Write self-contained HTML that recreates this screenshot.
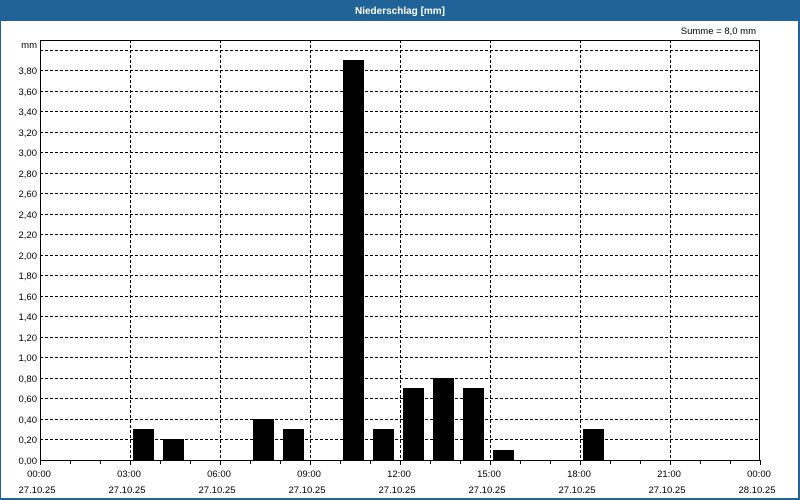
<!DOCTYPE html>
<html><head><meta charset="utf-8"><style>
html,body{margin:0;padding:0;width:800px;height:500px;overflow:hidden;background:#fff}
svg{display:block}
text{font-family:"Liberation Sans",sans-serif;font-size:9.5px;fill:#000}
</style></head><body>
<svg width="800" height="500" viewBox="0 0 800 500" shape-rendering="crispEdges">
<rect x="0" y="0" width="800" height="500" fill="#1f6399"/>
<rect x="1" y="21" width="797" height="477" fill="#fff"/>
<text x="400" y="14" text-anchor="middle" style="fill:#fff;font-weight:bold;font-size:10px">Niederschlag [mm]</text>
<text x="756" y="34" text-anchor="end">Summe = 8,0 mm</text>
<g stroke="#000" stroke-width="1" stroke-dasharray="3,2" fill="none">
<path d="M40 50.5H760M40 70.5H760M40 91.5H760M40 111.5H760M40 132.5H760M40 152.5H760M40 173.5H760M40 193.5H760M40 214.5H760M40 234.5H760M40 255.5H760M40 275.5H760M40 296.5H760M40 316.5H760M40 337.5H760M40 357.5H760M40 378.5H760M40 398.5H760M40 419.5H760M40 439.5H760"/>
<path d="M130.5 40V460M220.5 40V460M310.5 40V460M400.5 40V460M490.5 40V460M580.5 40V460M670.5 40V460"/>
</g>
<g fill="#000">
<rect x="133" y="429" width="21" height="31"/>
<rect x="163" y="439" width="21" height="21"/>
<rect x="253" y="419" width="21" height="41"/>
<rect x="283" y="429" width="21" height="31"/>
<rect x="343" y="60" width="21" height="400"/>
<rect x="373" y="429" width="21" height="31"/>
<rect x="403" y="388" width="21" height="72"/>
<rect x="433" y="378" width="21" height="82"/>
<rect x="463" y="388" width="21" height="72"/>
<rect x="493" y="450" width="21" height="10"/>
<rect x="583" y="429" width="21" height="31"/>
</g>
<rect x="40.5" y="40.5" width="719" height="420" fill="none" stroke="#000"/>
<g stroke="#000">
<path d="M40.5 460V465M70.5 460V464M100.5 460V464M130.5 460V465M160.5 460V464M190.5 460V464M220.5 460V465M250.5 460V464M280.5 460V464M310.5 460V465M340.5 460V464M370.5 460V464M400.5 460V465M430.5 460V464M460.5 460V464M490.5 460V465M520.5 460V464M550.5 460V464M580.5 460V465M610.5 460V464M640.5 460V464M670.5 460V465M700.5 460V464M730.5 460V464M760.5 460V465"/>
</g>
<g text-anchor="end">
<text x="37" y="48">mm</text>
<text x="37" y="74">3,80</text><text x="37" y="95">3,60</text><text x="37" y="115">3,40</text><text x="37" y="136">3,20</text><text x="37" y="156">3,00</text><text x="37" y="177">2,80</text><text x="37" y="197">2,60</text><text x="37" y="218">2,40</text><text x="37" y="238">2,20</text><text x="37" y="259">2,00</text><text x="37" y="279">1,80</text><text x="37" y="300">1,60</text><text x="37" y="320">1,40</text><text x="37" y="341">1,20</text><text x="37" y="361">1,00</text><text x="37" y="382">0,80</text><text x="37" y="402">0,60</text><text x="37" y="423">0,40</text><text x="37" y="443">0,20</text><text x="37" y="464">0,00</text>
</g>
<g text-anchor="middle">
<text x="39" y="477">00:00</text><text x="129" y="477">03:00</text><text x="219" y="477">06:00</text><text x="309" y="477">09:00</text><text x="399" y="477">12:00</text><text x="489" y="477">15:00</text><text x="579" y="477">18:00</text><text x="669" y="477">21:00</text><text x="759" y="477">00:00</text>
<text x="37" y="493">27.10.25</text><text x="127" y="493">27.10.25</text><text x="217" y="493">27.10.25</text><text x="307" y="493">27.10.25</text><text x="397" y="493">27.10.25</text><text x="487" y="493">27.10.25</text><text x="577" y="493">27.10.25</text><text x="667" y="493">27.10.25</text><text x="757" y="493">28.10.25</text>
</g>
</svg>
</body></html>
